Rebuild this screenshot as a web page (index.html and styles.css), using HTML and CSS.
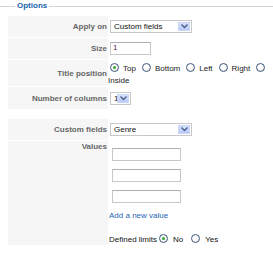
FILE: index.html
```html
<!DOCTYPE html>
<html>
<head>
<meta charset="utf-8">
<link rel="stylesheet" href="styles.css">
</head>
<body>
<fieldset class="adminform">
  <legend>Options</legend>
  <div class="form">
    <div class="key">Apply on</div>
    <div class="val"><span class="select wide"><span class="sel-text">Custom fields</span><span class="sel-btn"><svg width="7" height="5" viewBox="0 0 7 5"><path d="M0.5 0.5 L3.5 3.5 L6.5 0.5" fill="none" stroke="#4a5f8a" stroke-width="1.4"/></svg></span></span></div>

    <div class="key">Size</div>
    <div class="val"><span class="input size">1</span></div>

    <div class="key">Title position</div>
    <div class="val radios">
      <span class="radio checked"></span><span class="rlabel">Top</span><span class="radio"></span><span class="rlabel">Bottom</span><span class="radio"></span><span class="rlabel">Left</span><span class="radio"></span><span class="rlabel">Right</span><span class="radio"></span><span class="rlabel">Inside</span>
    </div>

    <div class="key">Number of columns</div>
    <div class="val"><span class="select narrow"><span class="sel-text">1</span><span class="sel-btn"><svg width="7" height="5" viewBox="0 0 7 5"><path d="M0.5 0.5 L3.5 3.5 L6.5 0.5" fill="none" stroke="#4a5f8a" stroke-width="1.4"/></svg></span></span></div>

    <div class="spacer"></div>
    <div class="spacer"></div>

    <div class="key">Custom fields</div>
    <div class="val"><span class="select wide"><span class="sel-text">Genre</span><span class="sel-btn"><svg width="7" height="5" viewBox="0 0 7 5"><path d="M0.5 0.5 L3.5 3.5 L6.5 0.5" fill="none" stroke="#4a5f8a" stroke-width="1.4"/></svg></span></span></div>

    <div class="key top">Values</div>
    <div class="val values">
      <div class="value-list">
        <span class="input value"></span>
        <span class="input value"></span>
        <span class="input value"></span>
      </div>
      <a class="add" href="#">Add a new value</a>
      <div class="limits">Defined limits<span class="radio checked"></span><span class="rlabel">No</span><span class="radio"></span><span class="rlabel">Yes</span></div>
    </div>
  </div>
</fieldset>
</body>
</html>
```

FILE: styles.css
```css
html, body {
  margin: 0;
  background: #fff;
}
body {
  font-family: "Liberation Sans", Arial, sans-serif;
  font-size: 8px;
  color: #222;
}
.adminform {
  margin: 0;
  border: 0;
  border-top: 1px solid #d5d5d5;
  padding: 4px 0 0 8px;
  min-width: 0;
}
.adminform legend {
  color: #1a63a8;
  font-weight: bold;
  font-size: 8px;
  line-height: 12px;
  padding: 0 2px;
  margin-left: 7px;
}
.form {
  display: grid;
  grid-template-columns: 100px 1fr;
  grid-template-rows: 21px 21px 26px 22px 8px 21px 104px;
  row-gap: 1px;
}
.key {
  background: #f6f6f6;
  color: #666;
  font-weight: bold;
  text-align: right;
  padding-right: 1px;
  display: flex;
  align-items: center;
  justify-content: flex-end;
}
.key.top {
  align-items: flex-start;
  padding-top: 1px;
}
.val {
  display: flex;
  align-items: center;
  padding-left: 2px;
}
.select {
  display: inline-flex;
  align-items: stretch;
  height: 13px;
  box-sizing: border-box;
  border: 1px solid #c8c8c8;
  background: #fff;
  padding: 1px;
  color: #111;
}
.select.wide { width: 82px; }
.select.narrow { width: 21px; }
.sel-text {
  flex: 1;
  line-height: 9px;
  padding-left: 2px;
  overflow: hidden;
  white-space: nowrap;
}
.sel-btn {
  width: 12px;
  background: linear-gradient(#d7e2fb, #b9cbf7);
  border: 1px solid #c9d6f6;
  box-sizing: border-box;
  display: flex;
  align-items: center;
  justify-content: center;
}
.input {
  display: inline-block;
  box-sizing: border-box;
  height: 13px;
  border: 1px solid #c8c8c8;
  border-top-color: #b0b0b0;
  background: #fff;
  line-height: 10px;
  padding-left: 2px;
  color: #5a1a4a;
}
.input.size { width: 41px; }
.radios {
  display: block;
  padding-top: 3px;
  line-height: 12px;
  padding-left: 1px;
}
.radio {
  display: inline-block;
  width: 9px;
  height: 9px;
  box-sizing: border-box;
  border: 1px solid #3f5a80;
  border-radius: 50%;
  background: radial-gradient(circle at 40% 40%, #fff 30%, #dcdcd6 100%);
  vertical-align: -1px;
  margin: 0 4px 0 1px;
  position: relative;
}
.radio.checked::after {
  content: "";
  position: absolute;
  left: 2px;
  top: 2px;
  width: 3px;
  height: 3px;
  border-radius: 50%;
  background: #2fa62f;
}
.rlabel {
  margin-right: 5px;
}
.radios .rlabel:last-child {
  margin-left: -1px;
}
.values {
  display: block;
  padding-left: 1px;
}
.value-list {
  display: flex;
  flex-direction: column;
  gap: 8px;
  padding: 7px 0 0 3px;
}
.input.value {
  width: 69px;
}
.add {
  display: block;
  color: #1d64b3;
  text-decoration: none;
  margin-top: 7px;
  line-height: 12px;
}
.limits {
  margin-top: 12px;
  line-height: 12px;
  color: #111;
}
.limits .radio {
  margin-left: 2px;
  margin-right: 5px;
}
.limits .rlabel { margin-right: 6px; }
```
